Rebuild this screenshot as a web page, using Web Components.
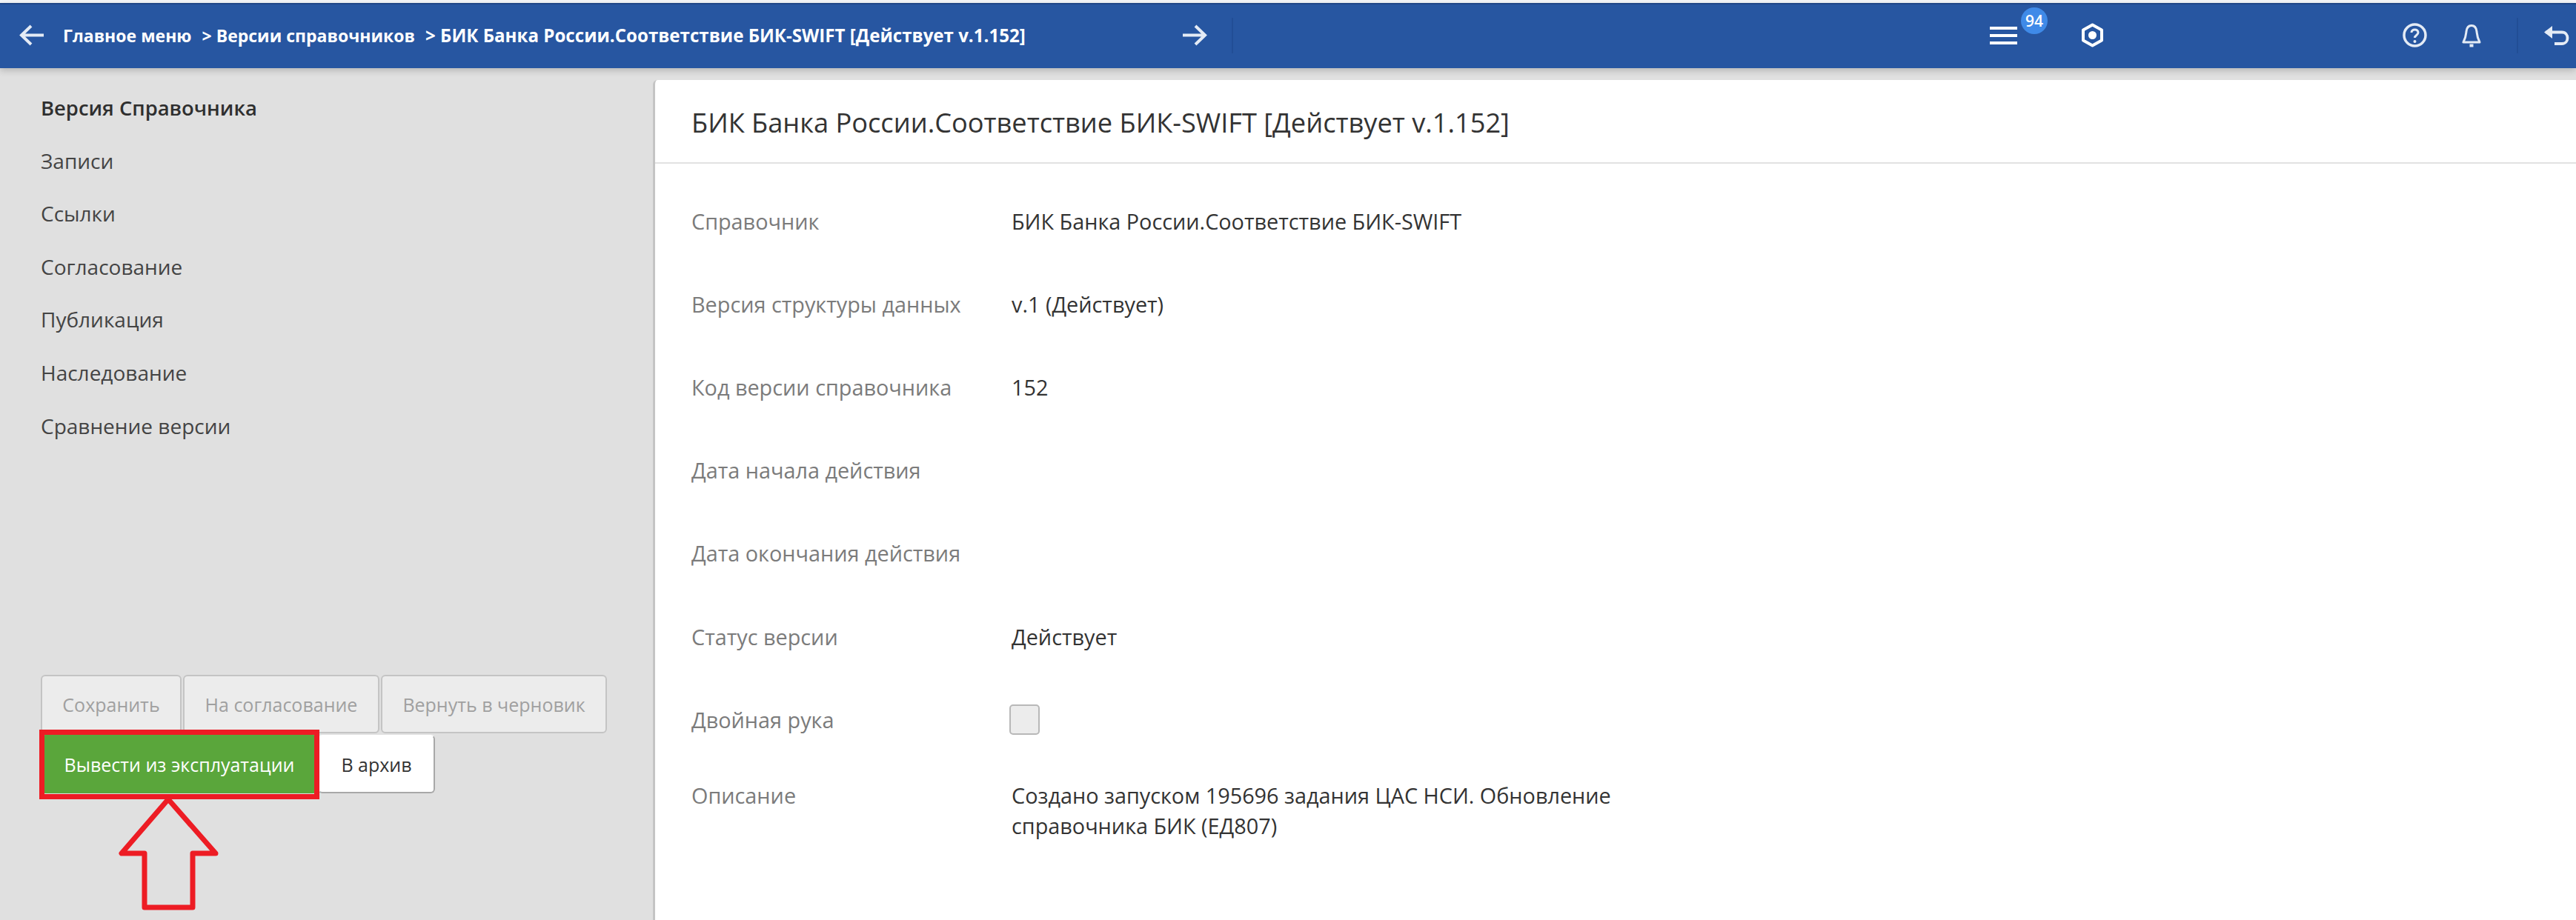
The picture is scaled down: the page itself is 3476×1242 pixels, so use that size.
<!DOCTYPE html>
<html lang="ru">
<head>
<meta charset="utf-8">
<title>БИК</title>
<style>
  html, body { margin: 0; height: 100%; }
  body {
    background: #e0e0e0;
    font-family: "Open Sans", "Noto Sans", sans-serif;
    color: #333;
    overflow: hidden;
  }
  app-layout { height: 1242px; }
</style>
</head>
<body>
<app-layout>
  <top-bar slot="top">
    <span slot="crumbs">Главное меню</span>
    <span slot="crumbs">&gt; Версии справочников</span>
    <span slot="crumbs" style="font-size: 24.100px">&gt; БИК Банка России.Соответствие БИК-SWIFT [Действует v.1.152]</span>
  </top-bar>
  <side-menu slot="side">
    <menu-item active>Версия Справочника</menu-item>
    <menu-item>Записи</menu-item>
    <menu-item>Ссылки</menu-item>
    <menu-item>Согласование</menu-item>
    <menu-item>Публикация</menu-item>
    <menu-item>Наследование</menu-item>
    <menu-item>Сравнение версии</menu-item>
    <action-button slot="actions" kind="off" w="190">Сохранить</action-button>
    <action-button slot="actions" kind="off" w="265">На согласование</action-button>
    <action-button slot="actions" kind="off" w="305">Вернуть в черновик</action-button>
    <action-button slot="actions2" kind="go" w="374">Вывести из эксплуатации</action-button>
    <action-button slot="actions2" kind="plain" w="158">В архив</action-button>
    <red-callout slot="over"></red-callout>
  </side-menu>
  <info-panel slot="main" heading="БИК Банка России.Соответствие БИК-SWIFT [Действует v.1.152]">
    <info-field label="Справочник">БИК Банка России.Соответствие БИК-SWIFT</info-field>
    <info-field label="Версия структуры данных">v.1 (Действует)</info-field>
    <info-field label="Код версии справочника">152</info-field>
    <info-field label="Дата начала действия"></info-field>
    <info-field label="Дата окончания действия"></info-field>
    <info-field label="Статус версии">Действует</info-field>
    <info-field label="Двойная рука"><check-box></check-box></info-field>
    <info-field label="Описание" tall>Создано запуском 195696 задания ЦАС НСИ. Обновление справочника БИК (ЕД807)</info-field>
  </info-panel>
</app-layout>

<script>
const app_layout_template = document.createElement("template");
app_layout_template.innerHTML = `
  <style>
    :host { display: flex; flex-direction: column; }
    .body { flex: 1; display: flex; min-height: 0; }
  </style>
  <slot name="top"></slot>
  <div class="body">
    <slot name="side"></slot>
    <slot name="main"></slot>
  </div>
`;

class AppLayout extends HTMLElement {
  constructor() {
    super();
    this.attachShadow({ mode: "open" });
    this.shadowRoot.appendChild(app_layout_template.content.cloneNode(true));
  }
}
customElements.define("app-layout", AppLayout);

const top_bar_template = document.createElement("template");
top_bar_template.innerHTML = `
  <style>
    :host {
      display: block;
      background: #f5f7fa;
      padding-top: 4px;
      position: relative;
      z-index: 2;
      color: #fff;
    }
    .bar {
      background: #2756a1;
      border-top: 2px solid #1f4688;
      box-sizing: border-box;
      height: 88px;
      padding-bottom: 3px;
      display: flex;
      align-items: center;
      box-shadow: 0 3px 9px rgba(0,0,0,.2);
    }
    svg { display: block; flex: none; fill: none; stroke: #e4ebf5; stroke-width: 4; }
    .back { margin-left: 26px; width: 33px; height: 29px; }
    .crumbs {
      margin-left: 26px;
      width: 1511px;
      flex: none;
      display: flex;
      align-items: center;
      gap: 14px;
      font-size: 23px;
      font-weight: 700;
      white-space: nowrap;
    }
    .fwd { width: 33px; height: 29px; }
    .sep { width: 2px; height: 48px; background: #214e96; flex: none; }
    .fwd-sep { margin-left: 33px; }
    .menu { margin-left: 1021px; width: 37px; height: 24px; position: relative; flex: none; }
    .menu i { display: block; height: 4px; background: #fff; margin-bottom: 6px; }
    .badge {
      position: absolute;
      left: 42px;
      top: -26px;
      width: 36px;
      height: 36px;
      border-radius: 50%;
      background: #3f8ae8;
      font-size: 21px;
      font-weight: 600;
      line-height: 36px;
      text-align: center;
      color: #fff;
    }
    .gear { margin-left: 85px; width: 33px; height: 33px; stroke: #fff; }
    .help { margin-left: 402px; width: 33px; height: 33px; }
    .bell { margin-left: 47px; width: 26px; height: 32px; }
    .sep2 { margin-left: 48px; }
    .undo { margin-left: 35px; width: 35px; height: 27px; }
  </style>
  <div class="bar">
    <svg class="back" viewBox="0 0 33 29"><path d="M33 14.500H3M16 2 3 14.500 16 27"/></svg>
    <div class="crumbs"><slot name="crumbs"></slot></div>
    <svg class="fwd" viewBox="0 0 33 29"><path d="M0 14.500h30M17 2l13 12.500L17 27"/></svg>
    <div class="sep fwd-sep"></div>
    <div class="menu"><i></i><i></i><i></i><span class="badge">94</span></div>
    <svg class="gear" viewBox="0 0 33 33"><path stroke-linejoin="round" d="M16.500 2.500 29 9.500v14l-12.500 7-12.500-7v-14z"/><circle cx="16.500" cy="16.500" r="5.500" fill="#fff" stroke="none"/></svg>
    <svg class="help" viewBox="0 0 33 33"><circle cx="16.500" cy="16.500" r="14.500" stroke-width="3.500"/><path stroke-width="3" d="M12 13c0-5.500 9-5.500 9 0 0 3.500-4.500 3.500-4.500 7"/><circle cx="16.500" cy="25" r="2" fill="#e4ebf5" stroke="none"/></svg>
    <svg class="bell" viewBox="0 0 26 32"><path stroke-width="3" stroke-linejoin="round" d="M13 2.500c-4.500 0-6.500 3.500-7 8-.5 4.500-.5 8-4 14.500h22c-3.500-6.500-3.500-10-4-14.500-.5-4.500-2.500-8-7-8z"/><path stroke-width="4" d="M10.500 29.500h5"/></svg>
    <div class="sep sep2"></div>
    <svg class="undo" viewBox="0 0 35 27"><path stroke-width="3.800" d="M2 9.500H24c10 0 10 15.500 0 15.500H14"/><path d="M0 9.500 11 1v17z" fill="#e4ebf5" stroke="none"/></svg>
  </div>
`;

class TopBar extends HTMLElement {
  constructor() {
    super();
    this.attachShadow({ mode: "open" });
    this.shadowRoot.appendChild(top_bar_template.content.cloneNode(true));
  }
}
customElements.define("top-bar", TopBar);

const side_menu_template = document.createElement("template");
side_menu_template.innerHTML = `
  <style>
    :host {
      display: flex;
      flex-direction: column;
      flex: none;
      width: 881px;
      box-sizing: border-box;
      padding: 18px 0 171px 55px;
      position: relative;
    }
    .grow { flex: 1; }
    .row { display: flex; gap: 2px; }
    .row2 { display: flex; margin-top: 2px; }
  </style>
  <div class="grow"><slot></slot></div>
  <div class="row"><slot name="actions"></slot></div>
  <div class="row2"><slot name="actions2"></slot></div>
  <slot name="over"></slot>
`;

class SideMenu extends HTMLElement {
  constructor() {
    super();
    this.attachShadow({ mode: "open" });
    this.shadowRoot.appendChild(side_menu_template.content.cloneNode(true));
  }
}
customElements.define("side-menu", SideMenu);

const menu_item_template = document.createElement("template");
menu_item_template.innerHTML = `
  <style>
    :host {
      display: block;
      height: 71.600px;
      line-height: 71.600px;
      font-size: 28px;
      color: #444;
    }
    :host([active]) { font-weight: 600; font-size: 27.400px; color: #2f2f2f; }
  </style>
  <slot></slot>
`;

class MenuItem extends HTMLElement {
  constructor() {
    super();
    this.attachShadow({ mode: "open" });
    this.shadowRoot.appendChild(menu_item_template.content.cloneNode(true));
  }
}
customElements.define("menu-item", MenuItem);

const action_button_template = document.createElement("template");
action_button_template.innerHTML = `
  <style>
    :host {
      display: flex;
      align-items: center;
      justify-content: center;
      box-sizing: border-box;
      height: 79px;
      border-radius: 6px;
      font-size: 25px;
      white-space: nowrap;
      border: 2px solid #b8b8b8;
    }
    :host([kind="off"]) { background: #ececec; color: #a0a0a0; border-color: #c4c4c4; }
    :host([kind="go"]) { background: #5aa63b; color: #fff; border-color: #5aa63b; }
    :host([kind="plain"]) { background: #fff; color: #333; border-color: #fff #a8a8a8 #a8a8a8 #fff; }
  </style>
  <slot></slot>
`;

class ActionButton extends HTMLElement {
  constructor() {
    super();
    this.attachShadow({ mode: "open" });
    this.shadowRoot.appendChild(action_button_template.content.cloneNode(true));
  }
  connectedCallback() {
    this.style.width = this.getAttribute("w") + "px";
  }
}
customElements.define("action-button", ActionButton);

// annotation painted over the screenshot, sits on top of the buttons
const red_callout_template = document.createElement("template");
red_callout_template.innerHTML = `
  <style>
    :host { position: absolute; left: 50px; top: 890px; display: block; }
    svg { display: block; fill: none; stroke: #ed1c24; stroke-width: 7; }
  </style>
  <svg width="390" height="255" viewBox="0 0 390 255">
    <rect x="6.500" y="6.500" width="371" height="87"/>
    <path stroke-linejoin="round" d="M177 97 114 170H145V243H210V170H241z"/>
  </svg>
`;

class RedCallout extends HTMLElement {
  constructor() {
    super();
    this.attachShadow({ mode: "open" });
    this.shadowRoot.appendChild(red_callout_template.content.cloneNode(true));
  }
}
customElements.define("red-callout", RedCallout);

const info_panel_template = document.createElement("template");
info_panel_template.innerHTML = `
  <style>
    :host {
      display: block;
      flex: 1;
      margin-top: 16px;
      background: #fff;
      border-left: 3px solid #c4c4c4;
      border-top-left-radius: 6px;
    }
    h1 {
      margin: 0;
      box-sizing: border-box;
      height: 113px;
      padding: 3px 0 0 49px;
      font-size: 36.200px;
      font-weight: 400;
      line-height: 108px;
      color: #333;
      border-bottom: 2px solid #e2e2e2;
      white-space: nowrap;
    }
    .fields { padding: 21px 0 0 49px; }
  </style>
  <h1></h1>
  <div class="fields"><slot></slot></div>
`;

class InfoPanel extends HTMLElement {
  constructor() {
    super();
    this.attachShadow({ mode: "open" });
    this.shadowRoot.appendChild(info_panel_template.content.cloneNode(true));
    this.shadowRoot.querySelector("h1").textContent = this.getAttribute("heading");
  }
}
customElements.define("info-panel", InfoPanel);

const info_field_template = document.createElement("template");
info_field_template.innerHTML = `
  <style>
    :host {
      display: flex;
      align-items: center;
      height: 112.200px;
      font-size: 28.800px;
    }
    :host([tall]) { align-items: flex-start; height: auto; margin-top: 26px; }
    .label { flex: none; width: 432px; color: #7b7b7b; }
    .value { width: 860px; color: #333; line-height: 41px; }
    :host([tall]) .label { line-height: 41px; }
  </style>
  <div class="label"></div>
  <div class="value"><slot></slot></div>
`;

class InfoField extends HTMLElement {
  constructor() {
    super();
    this.attachShadow({ mode: "open" });
    this.shadowRoot.appendChild(info_field_template.content.cloneNode(true));
    this.shadowRoot.querySelector(".label").textContent = this.getAttribute("label");
  }
}
customElements.define("info-field", InfoField);

const check_box_template = document.createElement("template");
check_box_template.innerHTML = `
  <style>
    :host {
      display: block;
      box-sizing: border-box;
      width: 41px;
      height: 41px;
      margin-left: -3px;
      background: #ececec;
      border: 2px solid #b8b8b8;
      border-radius: 5px;
    }
  </style>
`;

class CheckBox extends HTMLElement {
  constructor() {
    super();
    this.attachShadow({ mode: "open" });
    this.shadowRoot.appendChild(check_box_template.content.cloneNode(true));
  }
}
customElements.define("check-box", CheckBox);
</script>
</body>
</html>
